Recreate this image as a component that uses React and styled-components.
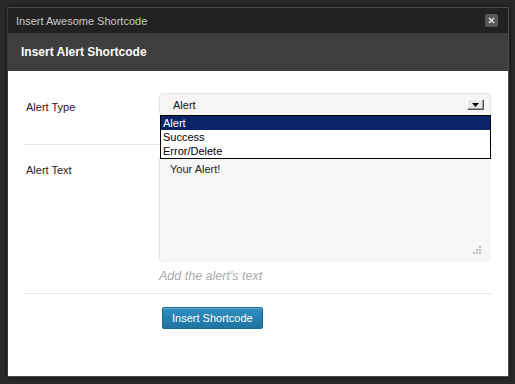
import styled, { createGlobalStyle } from 'styled-components';

const GlobalStyle = createGlobalStyle`
  html, body { margin: 0; padding: 0; }
  body {
    width: 515px;
    height: 384px;
    overflow: hidden;
    background: #2a2a2a;
    font-family: "Liberation Sans", Arial, sans-serif;
  }
`;

const Backdrop = styled.div`
  width: 515px;
  height: 384px;
  padding: 7px 6px 7px 7px;
  box-sizing: border-box;
`;

const Modal = styled.div`
  width: 502px;
  height: 370px;
  display: flex;
  flex-direction: column;
  background: #fff;
  border: 1px solid #4a4a4a;
  border-left-color: #3a3a3a;
  box-sizing: border-box;
  box-shadow: 0 0 6px rgba(0, 0, 0, 0.6);
`;

const TitleBar = styled.div`
  height: 25px;
  flex: none;
  display: flex;
  align-items: center;
  justify-content: space-between;
  padding: 0 10px 0 8px;
  background: #222;
  color: #c8c8c8;
  font-size: 11px;
`;

const CloseButton = styled.button`
  width: 13px;
  height: 13px;
  padding: 0;
  border: none;
  border-radius: 2px;
  background: #585858;
  display: flex;
  align-items: center;
  justify-content: center;
  svg { display: block; }
`;

const Header = styled.div`
  height: 38px;
  flex: none;
  display: flex;
  align-items: center;
  padding-left: 13px;
  background: #3e3e3e;
  color: #fff;
  font-size: 12px;
  font-weight: bold;
`;

const Body = styled.div`
  flex: 1;
  padding: 0 15px 0 15px;
`;

const Row = styled.div`
  position: relative;
  display: flex;
  padding: ${(p) => p.$pad};
  border-bottom: ${(p) => (p.$last ? 'none' : '1px solid #e6e6e6')};
`;

const Label = styled.div`
  width: 136px;
  flex: none;
  padding: ${(p) => p.$top || '8px'} 0 0 3px;
  box-sizing: border-box;
  font-size: 11px;
  color: #222;
`;

const Field = styled.div`
  width: 332px;
  display: flex;
  flex-direction: column;
`;

const Select = styled.div`
  height: 23px;
  display: flex;
  align-items: center;
  justify-content: space-between;
  padding: 0 6px 0 13px;
  background: #f5f5f5;
  border: 1px solid #e4e4e4;
  border-radius: 4px;
  font-size: 11px;
  color: #111;
  box-sizing: border-box;
`;

const ArrowBox = styled.span`
  width: 17px;
  height: 11px;
  background: #e6e6e6;
  border: 1px solid;
  border-color: #fff #555 #555 #fff;
  box-shadow: inset -1px -1px 0 #999;
  display: flex;
  align-items: center;
  justify-content: center;
  box-sizing: border-box;
`;

const OptionList = styled.ul`
  position: absolute;
  top: 44px;
  left: 137px;
  width: 331px;
  margin: 0;
  padding: 0;
  list-style: none;
  background: #fff;
  border: 1px solid #000;
  box-sizing: border-box;
  z-index: 2;
`;

const Option = styled.li`
  height: 14px;
  line-height: 14px;
  padding-left: 2px;
  font-size: 11px;
  background: ${(p) => (p.$active ? '#0a246a' : 'transparent')};
  color: ${(p) => (p.$active ? '#fff' : '#000')};
`;

const TextArea = styled.div`
  position: relative;
  height: 104px;
  padding: 5px 10px;
  background: #f7f7f7;
  border-radius: 0 0 4px 4px;
  border-left: 1px solid #e2e2e2;
  box-sizing: border-box;
  font-size: 11px;
  color: #222;
`;

const Grip = styled.span`
  position: absolute;
  right: 10px;
  bottom: 8px;
  line-height: 0;
`;

const Help = styled.div`
  margin-top: 7px;
  font-size: 12.5px;
  font-style: italic;
  color: #aaa;
`;

const PrimaryButton = styled.button`
  margin-left: 139px;
  height: 22px;
  padding: 0 9px;
  border: 1px solid #1b6a94;
  border-radius: 2px;
  background: linear-gradient(#2f90c2, #1f739f);
  box-shadow: inset 0 1px 0 rgba(255, 255, 255, 0.25);
  color: #fff;
  font-family: "Liberation Sans", Arial, sans-serif;
  font-size: 11px;
`;

const App = () => (
  <>
    <GlobalStyle />
    <Backdrop>
      <Modal>
        <TitleBar>
          <span>Insert Awesome Shortcode</span>
          <CloseButton aria-label="Close">
            <svg width="7" height="7" viewBox="0 0 7 7">
              <path d="M1 1 L6 6 M6 1 L1 6" stroke="#ddd" strokeWidth="1.6" />
            </svg>
          </CloseButton>
        </TitleBar>
        <Header>Insert Alert Shortcode</Header>
        <Body>
          <Row $pad="22px 0 28px">
            <Label>Alert Type</Label>
            <Field>
              <Select>
                <span>Alert</span>
                <ArrowBox>
                  <svg width="7" height="4" viewBox="0 0 7 4">
                    <path d="M0 0 H7 L3.5 4 Z" fill="#000" />
                  </svg>
                </ArrowBox>
              </Select>
            </Field>
            <OptionList>
              <Option $active>Alert</Option>
              <Option>Success</Option>
              <Option>Error/Delete</Option>
            </OptionList>
          </Row>
          <Row $pad="13px 0 10px">
            <Label $top="6px">Alert Text</Label>
            <Field>
              <TextArea>
                Your Alert!
                <Grip>
                  <svg width="9" height="9" viewBox="0 0 9 9" fill="#bbb">
                    <rect x="7" y="1" width="2" height="2" />
                    <rect x="4" y="4" width="2" height="2" />
                    <rect x="7" y="4" width="2" height="2" />
                    <rect x="1" y="7" width="2" height="2" />
                    <rect x="4" y="7" width="2" height="2" />
                    <rect x="7" y="7" width="2" height="2" />
                  </svg>
                </Grip>
              </TextArea>
              <Help>Add the alert's text</Help>
            </Field>
          </Row>
          <Row $pad="13px 0" $last>
            <PrimaryButton>Insert Shortcode</PrimaryButton>
          </Row>
        </Body>
      </Modal>
    </Backdrop>
  </>
);

export default App;
